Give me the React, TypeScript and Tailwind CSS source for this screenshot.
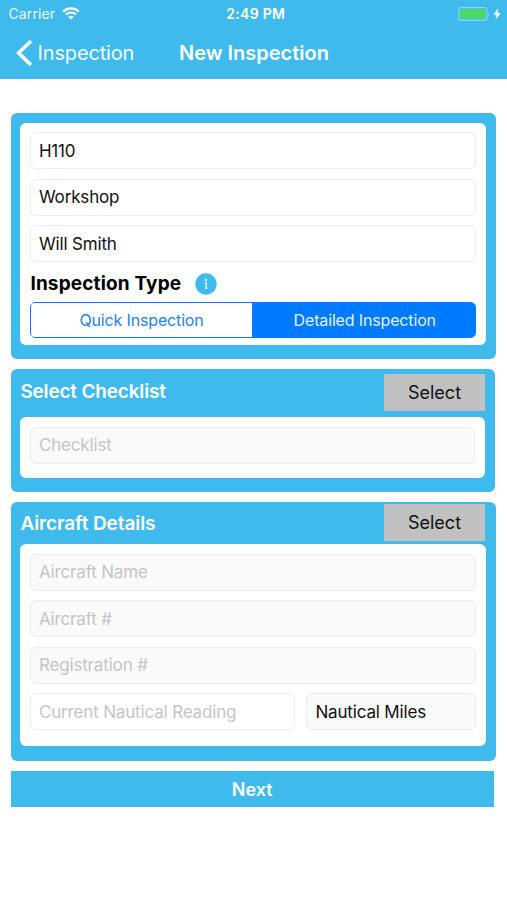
import type { ReactNode } from 'react';
import clsx from 'clsx';

function StatusBar() {
  return (
    <div className="grid h-[27px] grid-cols-[1fr_auto_1fr] items-center pl-[8.5px] pr-[6px] text-[14px] leading-[27px]">
      <div className="flex items-center gap-[7px]">
        <span className="tracking-[0.1px] opacity-90">Carrier</span>
        <svg className="h-[13px] w-[18px]" viewBox="0 0 18 13" fill="none" stroke="white">
          <path d="M1.2 4.6C5.6 0.4 12.4 0.4 16.8 4.6" strokeWidth="2.2" />
          <path d="M4 7.5C6.9 4.8 11.1 4.8 14 7.5" strokeWidth="2.1" />
          <path d="M9 12.6L6.3 9.8C7.8 8.4 10.2 8.4 11.7 9.8Z" fill="white" stroke="none" />
        </svg>
      </div>
      <span className="pl-[2px] font-semibold tracking-[0.3px]">2:49 PM</span>
      <div className="flex items-center justify-end gap-[3px]">
        <svg className="h-[14px] w-[32px]" viewBox="0 0 32 14">
          <rect x="0.9" y="0.6" width="28" height="12.8" rx="2.5" fill="none" stroke="#8fd6f5" strokeWidth="1.1" />
          <rect x="2.4" y="2.2" width="25" height="9.6" rx="0.8" fill="#4cd964" />
          <path d="M30.2 5v4c1.3-.5 1.3-3.500 0-4Z" fill="#8fd6f5" />
        </svg>
        <svg className="h-[12px] w-[8px]" viewBox="0 0 8 12" fill="white">
          <path d="M5.200 0.300L0.400 6.800H3.400L2.400 11.700L7.600 5H4.600Z" />
        </svg>
      </div>
    </div>
  );
}

function NavBar() {
  return (
    <div className="flex h-[51px] items-center">
      <svg className="ml-[16px] h-[28px] w-[17px]" viewBox="0 0 17 28" fill="none" stroke="white" strokeWidth="3.6">
        <path d="M15 2L2.600 14L15 26" />
      </svg>
      <span className="ml-[4.500px] w-[141.500px] text-[20px] tracking-[-0.150px] opacity-95">Inspection</span>
      <h1 className="text-[20px] font-semibold">New Inspection</h1>
    </div>
  );
}

function Field({ children, className, muted, disabled }: { children: ReactNode; className?: string; muted?: boolean; disabled?: boolean }) {
  return (
    <div
      className={clsx(
        'flex h-[37px] items-center rounded-[6px] border border-[#ececec] px-2 pt-[1.500px] text-[17px] tracking-[-0.160px]',
        muted ? 'text-[#c5c5c7]' : 'text-[#111]',
        disabled ? 'bg-[#fafafa]' : 'bg-white',
        className,
      )}
    >
      {children}
    </div>
  );
}

function SelectButton({ className }: { className?: string }) {
  return (
    <button className={clsx('h-[37px] w-[101px] bg-[#c0c0c0] text-[18px] text-[#111]', className)}>Select</button>
  );
}

export default function App() {
  return (
    <div className="h-[900px] w-[507px] overflow-hidden bg-white font-['Inter',sans-serif] text-black">
      <header className="h-[79px] bg-[#3fbaec] text-white">
        <StatusBar />
        <NavBar />
      </header>

      <main className="flex flex-col pl-[11px] pt-[34px]">
        <section className="h-[246px] w-[485px] rounded-[6px] bg-[#3fbaec] pl-[9.400px] pt-[10px]">
          <div className="h-[222.400px] w-[465.500px] rounded-[6px] bg-white px-[9.500px] pt-[9.400px]">
            <div className="flex flex-col gap-[9.400px]">
              <Field>H110</Field>
              <Field>Workshop</Field>
              <Field>Will Smith</Field>
            </div>
            <div className="flex h-[40px] items-center pt-[3px]">
              <h2 className="w-[165px] pl-[0.500px] pt-[2px] text-[19px] font-bold tracking-[0.150px]">Inspection Type</h2>
              <svg className="size-[22px]" viewBox="0 0 22 22">
                <circle cx="11" cy="11" r="10.700" fill="#3fbaec" />
                <circle cx="10.900" cy="6.900" r="1.300" fill="#c9effc" />
                <path d="M9.800 9.700H11.200V15.300M9.800 15.300H12.400" fill="none" stroke="#c9effc" strokeWidth="1.600" />
              </svg>
            </div>
            <div className="flex h-[35.500px] overflow-hidden rounded-[5px] border-[1.500px] border-[#007aff] text-[16px] tracking-[-0.150px]">
              <button className="flex-1 bg-white text-[#1c82f5]">Quick Inspection</button>
              <button className="flex-1 bg-[#007aff] pl-[2px] text-[#e2f1ff]">Detailed Inspection</button>
            </div>
          </div>
        </section>

        <section className="mt-[10px] h-[123px] w-[484px] rounded-[6px] bg-[#3fbaec] pl-[9.400px]">
          <div className="flex h-[48.400px] justify-between pr-[10px]">
            <h2 className="mt-[9px] text-[19px] font-semibold leading-[28px] tracking-[-0.180px] text-white">Select Checklist</h2>
            <SelectButton className="mt-[5.400px]" />
          </div>
          <div className="h-[60.500px] w-[464.500px] rounded-[6px] bg-white px-[9.500px] pt-[9.500px]">
            <Field muted disabled>Checklist</Field>
          </div>
        </section>

        <section className="mt-[10px] h-[259px] w-[485px] rounded-[6px] bg-[#3fbaec] pl-[9.400px]">
          <div className="flex h-[42.400px] justify-between pr-[11px]">
            <h2 className="mt-[8px] text-[19px] font-semibold leading-[28px] tracking-[-0.100px] text-white">Aircraft Details</h2>
            <SelectButton className="mt-[2px]" />
          </div>
          <div className="flex h-[201.500px] w-[465.500px] flex-col gap-[9.400px] rounded-[6px] bg-white px-[9.500px] pt-[9.500px]">
            <Field muted disabled>Aircraft Name</Field>
            <Field muted disabled>Aircraft #</Field>
            <Field muted disabled>Registration #</Field>
            <div className="flex justify-between">
              <Field muted className="w-[265px]">Current Nautical Reading</Field>
              <Field disabled className="w-[170px]">Nautical Miles</Field>
            </div>
          </div>
        </section>

        <button className="mt-[9.500px] h-[36.500px] w-[482.500px] bg-[#3fbaec] pt-[1px] text-[18px] font-semibold text-white">Next</button>
      </main>
    </div>
  );
}
